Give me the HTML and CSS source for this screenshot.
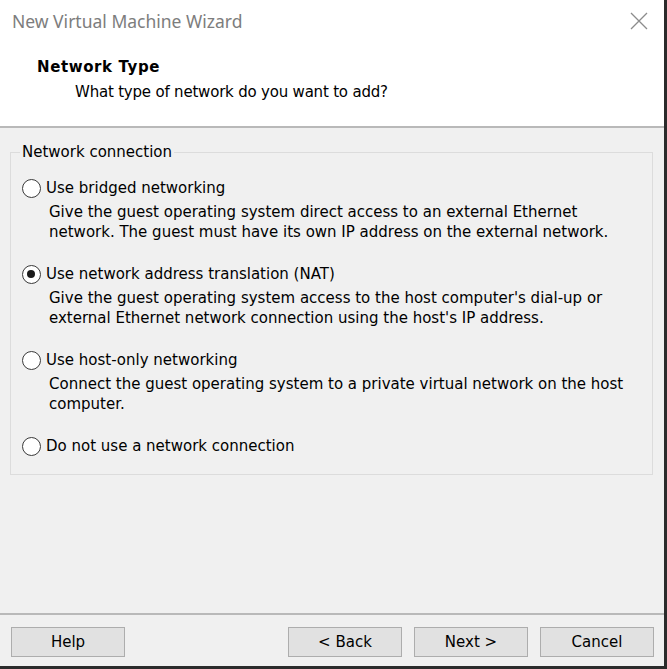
FILE: index.html
```html
<!DOCTYPE html>
<html>
<head>
<meta charset="utf-8">
<link rel="stylesheet" href="styles.css">
</head>
<body>
<div class="window">
  <div class="top">
    <div class="titlebar">
      <span class="title">New Virtual Machine Wizard</span>
      <svg class="close" width="18" height="18" viewBox="0 0 18 18"><path d="M1 1 L17 17 M17 1 L1 17" stroke="#8c8c8c" stroke-width="1.3" fill="none"/></svg>
    </div>
    <div class="header">
      <div class="h-title">Network Type</div>
      <div class="h-sub">What type of network do you want to add?</div>
    </div>
  </div>
  <div class="body">
    <fieldset class="group">
      <legend class="legend">Network connection</legend>
      <div class="option">
        <div class="opt-row"><span class="radio"></span><span class="opt-label">Use bridged networking</span></div>
        <div class="desc">Give the guest operating system direct access to an external Ethernet<br>network. The guest must have its own IP address on the external network.</div>
      </div>
      <div class="option">
        <div class="opt-row"><span class="radio checked"></span><span class="opt-label">Use network address translation (NAT)</span></div>
        <div class="desc">Give the guest operating system access to the host computer's dial-up or<br>external Ethernet network connection using the host's IP address.</div>
      </div>
      <div class="option">
        <div class="opt-row"><span class="radio"></span><span class="opt-label">Use host-only networking</span></div>
        <div class="desc">Connect the guest operating system to a private virtual network on the host<br>computer.</div>
      </div>
      <div class="option last">
        <div class="opt-row"><span class="radio"></span><span class="opt-label">Do not use a network connection</span></div>
      </div>
    </fieldset>
  </div>
  <div class="footer">
    <button class="btn">Help</button>
    <div class="spacer"></div>
    <button class="btn">&lt; Back</button>
    <button class="btn">Next &gt;</button>
    <button class="btn">Cancel</button>
  </div>
</div>
</body>
</html>
```
FILE: styles.css
```css
html, body {
  margin: 0;
  padding: 0;
  background: #f0f0f0;
}
.window {
  width: 664px;
  height: 666px;
  border-right: 3px solid #2b2b2b;
  border-bottom: 3px solid #2b2b2b;
  display: flex;
  flex-direction: column;
  background: #f0f0f0;
  font-family: "DejaVu Sans", sans-serif;
  font-size: 15px;
  color: #000;
}
.top {
  background: #fff;
  height: 128px;
  border-bottom: 2px solid #b9b9b9;
  box-sizing: border-box;
}
.titlebar {
  height: 42px;
  display: flex;
  align-items: center;
  justify-content: space-between;
  padding: 0 16px 0 12px;
}
.title {
  font-family: "Noto Sans", sans-serif;
  font-size: 17.5px;
  color: #7d7d7d;
}
.header {
  padding: 15px 0 0 37px;
}
.h-title {
  font-weight: bold;
  line-height: 20px;
  letter-spacing: 0.6px;
}
.h-sub {
  margin-left: 38px;
  margin-top: 5px;
  line-height: 20px;
  letter-spacing: -0.2px;
}
.body {
  flex: 1;
  padding: 14px 0 0 10px;
}
.group {
  width: 643px;
  box-sizing: border-box;
  margin: 0;
  padding: 15px 0 8px 11px;
  border: 1px solid #dcdcdc;
  height: 333px;
}
.legend {
  padding: 0 2px;
  margin-left: -2px;
  line-height: 20px;
}
.option {
  margin-bottom: 21px;
}
.opt-row {
  display: flex;
  align-items: center;
  height: 22px;
}
.radio {
  width: 19px;
  height: 19px;
  border: 1.5px solid #3a3a3a;
  border-radius: 50%;
  background: #fff;
  box-sizing: border-box;
  margin-right: 5px;
  position: relative;
}
.radio.checked::after {
  content: "";
  position: absolute;
  left: 4px;
  top: 4px;
  width: 8px;
  height: 8px;
  border-radius: 50%;
  background: #1a1a1a;
}
.desc {
  margin-left: 27px;
  margin-top: 3px;
  line-height: 20px;
}
.footer {
  border-top: 2px solid #b9b9b9;
  height: 53px;
  box-sizing: border-box;
  display: flex;
  align-items: flex-start;
  padding: 12px 10px 0 11px;
  gap: 13px;
}
.spacer {
  flex: 1;
}
.btn {
  width: 114px;
  height: 30px;
  background: #e1e1e1;
  border: 1px solid #adadad;
  font-family: inherit;
  font-size: 15px;
  color: #000;
  padding: 0;
}
.btn + .btn {
  margin-left: -1px;
}
```
